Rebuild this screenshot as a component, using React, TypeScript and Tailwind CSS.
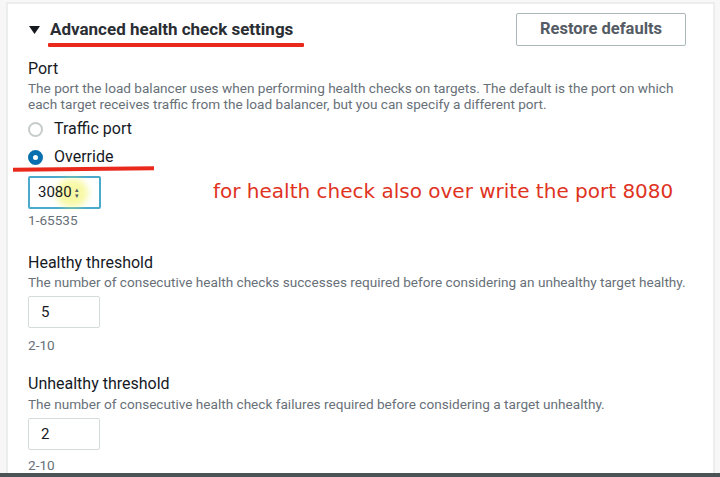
import React from "react";

const font = { fontFamily: "Roboto, 'Open Sans', sans-serif" };

function NumberBox({ value }: { value: string }) {
  return (
    <div className="w-[72px] h-[32px] flex items-center pl-[12px] text-[15px] text-[#16191f] border border-[#d5dbdb] rounded-[2px]">
      {value}
    </div>
  );
}

export default function App() {
  return (
    <div className="w-[720px] h-[477px] bg-white flex flex-col overflow-hidden" style={font}>
      <div className="flex-1 flex bg-[#f7f7f7] overflow-hidden">
        <div className="ml-[6px] mt-[2px] w-[709px] bg-white border-l-2 border-t-2 border-r-2 border-[#eceeee] pl-[20px] pr-[27px]">
          <div className="flex items-center justify-between mt-[9px] h-[33px]">
            <div className="relative flex items-center">
              <svg width="12" height="10" viewBox="0 0 12 10" className="mr-[9px] ml-[1px]">
                <path d="M0 1 H11 L5.5 9 Z" fill="#16191f" />
              </svg>
              <span className="text-[17px] font-bold text-[#2a2e33]">
                Advanced health check settings
              </span>
              <div className="absolute left-[20px] top-[26px] w-[256px] h-[4px] bg-[#e8291c] rounded-[1px]" />
            </div>
            <div className="w-[170px] h-[33px] border border-[#aab7b8] rounded-[2px] flex items-center justify-center text-[16.5px] font-bold text-[#545b64]">
              Restore defaults
            </div>
          </div>

          <div className="mt-[13px] text-[16px] text-[#16191f] leading-[20px]">Port</div>
          <div className="mt-[1px] text-[13.6px] text-[#687078] leading-[16px] whitespace-nowrap">
            The port the load balancer uses when performing health checks on targets. The default is the port on which
            <br />
            each target receives traffic from the load balancer, but you can specify a different port.
          </div>

          <div className="mt-[7px] flex items-center h-[20px]">
            <div className="w-[15px] h-[15px] rounded-full border-2 border-[#c6cbcb]" />
            <span className="ml-[11px] text-[16px] text-[#16191f]">Traffic port</span>
          </div>
          <div className="relative mt-[8px] flex items-center h-[20px]">
            <div className="w-[15px] h-[15px] rounded-full border-[5px] border-[#0a6fae] bg-white" />
            <span className="ml-[11px] text-[16px] text-[#16191f]">Override</span>
            <div className="absolute left-[-15px] top-[20px] w-[141px] h-[4px] bg-[#e8291c] -rotate-[0.7deg]" />
          </div>

          <div className="mt-[9px] flex items-center">
            <div className="relative w-[73px] h-[33px] border-2 border-[#49aacb] rounded-[2px] flex items-center pl-[8px] text-[15px] text-[#16191f]">
              <span className="absolute left-[26px] top-[1px] w-[32px] h-[28px] rounded-full bg-[#f3f56a] opacity-60 blur-[3px]" />
              <span className="relative">3080</span>
              <span className="relative ml-[3px] flex flex-col items-center text-[7px] leading-[6px] text-[#545b64]">
                <span>▴</span>
                <span>▾</span>
              </span>
            </div>
            <div className="ml-[112px] -mt-[4px] text-[20px] text-[#e0331f]" style={{ fontFamily: "'DejaVu Sans', sans-serif" }}>
              for health check also over write the port 8080
            </div>
          </div>
          <div className="mt-[3px] text-[13.6px] text-[#687078] leading-[16px]">1-65535</div>

          <div className="mt-[25px] text-[16px] text-[#16191f] leading-[20px]">Healthy threshold</div>
          <div className="mt-[1px] text-[13.6px] text-[#687078] leading-[16px] whitespace-nowrap">
            The number of consecutive health checks successes required before considering an unhealthy target healthy.
          </div>
          <div className="mt-[6px]">
            <NumberBox value="5" />
          </div>
          <div className="mt-[9px] text-[13.6px] text-[#687078] leading-[16px]">2-10</div>

          <div className="mt-[21px] text-[16px] text-[#16191f] leading-[20px]">Unhealthy threshold</div>
          <div className="mt-[2px] text-[13.6px] text-[#687078] leading-[16px] whitespace-nowrap">
            The number of consecutive health check failures required before considering a target unhealthy.
          </div>
          <div className="mt-[6px]">
            <NumberBox value="2" />
          </div>
          <div className="mt-[7px] text-[13.6px] text-[#687078] leading-[16px]">2-10</div>
        </div>
      </div>
      <div className="h-[4px] bg-[#4b5357]" />
    </div>
  );
}
